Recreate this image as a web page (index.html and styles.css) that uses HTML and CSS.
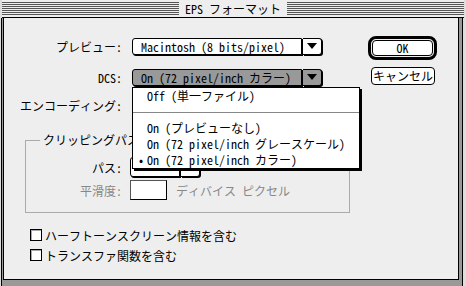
FILE: index.html
```html
<!DOCTYPE html>
<html lang="ja">
<head>
    <meta charset="UTF-8">
    <title>EPS フォーマット</title>
    <link rel="stylesheet" href="styles.css">
</head>
<body>
    <div class="window">
        <div class="titlebar">
            <span class="title">EPS フォーマット</span>
        </div>
        <div class="frame">
            <div class="content">
                <div class="main">
                    <div class="form">
                        <div class="row row-preview">
                            <span class="label">プレビュー:</span>
                            <div class="popup wide">
                                <span class="popup-text">Macintosh (8 bits/pixel)</span>
                                <span class="popup-arrow"><span class="tri"></span></span>
                            </div>
                        </div>
                        <div class="row row-dcs">
                            <span class="label">DCS:</span>
                            <div class="popup wide active">
                                <span class="popup-text">On (72 pixel/inch カラー)</span>
                                <span class="popup-arrow"><span class="tri"></span></span>

                                <!-- open menu of the DCS popup -->
                                <ul class="menu">
                                    <li><span class="mark"></span>Off (単一ファイル)</li>
                                    <li class="sep"></li>
                                    <li><span class="mark"></span>On (プレビューなし)</li>
                                    <li><span class="mark"></span>On (72 pixel/inch グレースケール)</li>
                                    <li><span class="mark">•</span>On (72 pixel/inch カラー)</li>
                                </ul>
                            </div>
                        </div>
                        <div class="row row-enc">
                            <span class="label">エンコーディング:</span>
                        </div>

                        <fieldset class="group">
                            <legend>クリッピングパス</legend>
                            <div class="row row-path">
                                <span class="label">パス:</span>
                                <div class="popup small">
                                    <span class="popup-text"></span>
                                    <span class="popup-arrow"></span>
                                </div>
                            </div>
                            <div class="row row-flat">
                                <span class="label dim">平滑度:</span>
                                <span class="field"></span>
                                <span class="unit dim">ディバイス ピクセル</span>
                            </div>
                        </fieldset>

                        <label class="check"><span class="box"></span>ハーフトーンスクリーン情報を含む</label>
                        <label class="check"><span class="box"></span>トランスファ関数を含む</label>
                    </div>

                    <div class="buttons">
                        <div class="ok-ring"><div class="btn ok">OK</div></div>
                        <div class="btn cancel">キャンセル</div>
                    </div>
                </div>
            </div>
        </div>
    </div>
</body>
</html>
```

FILE: styles.css
```css
body {
    margin: 0;
    background-color: #dddddd;
    font-family: "Noto Sans Mono CJK JP", "Noto Sans CJK JP", sans-serif;
    font-size: 12px;
    font-weight: 300;
    color: #000;
}

.window {
    width: 466px;
    height: 286px;
    background-color: #dddddd;
    overflow: hidden;
}

/* striped title bar */
.titlebar {
    height: 17px;
    margin: 0 2px 0 2px;
    border-bottom: 1px solid #000;
    background: repeating-linear-gradient(to bottom, #eeeeee 0, #eeeeee 1px, #555555 1px, #555555 2px);
    background-size: 100% 15px;
    background-position: 0 1px;
    background-repeat: no-repeat;
    background-color: #eeeeee;
    display: flex;
    justify-content: center;
    align-items: center;
}

.title {
    background-color: #eeeeee;
    padding: 0 6px;
    line-height: 17px;
    height: 17px;
}

.frame {
    margin: 0 3px 1px 1px;
    height: 266px;
    border: 1px solid #000;
    border-top: none;
    background-color: #999999;
    padding: 0 3px 3px 1px;
}

.content {
    height: 262px;
    border: 1px solid #000;
    border-top: none;
    background-color: #eeeeee;
    padding-top: 19px;
    box-sizing: border-box;
}

.main {
    display: grid;
    grid-template-columns: 346px 1fr;
}

.row {
    display: flex;
    align-items: center;
    height: 18px;
}

.label {
    width: 118px;
    text-align: right;
    flex-shrink: 0;
    white-space: nowrap;
}

.row-dcs { margin-top: 13px; }
.row-enc { margin-top: 10px; }

.popup {
    position: relative;
    display: flex;
    height: 17px;
    margin-left: 10px;
    box-sizing: border-box;
}

.popup-text {
    flex: 1;
    background-color: #fff;
    border: 1px solid #000;
    border-radius: 3px 0 0 3px;
    box-shadow: 1px 1px 0 #000;
    padding-left: 8px;
    line-height: 15px;
    white-space: nowrap;
}

.popup-arrow {
    width: 18px;
    background-color: #fff;
    border: 1px solid #000;
    border-left: none;
    border-radius: 0 3px 3px 0;
    box-shadow: 1px 1px 0 #000;
    margin-left: 1px;
    display: flex;
    align-items: center;
    justify-content: center;
}

.tri {
    width: 0;
    height: 0;
    border-left: 5px solid transparent;
    border-right: 5px solid transparent;
    border-top: 6px solid #000;
}

.wide { width: 190px; }

.active .popup-text,
.active .popup-arrow {
    background-color: #999999;
}

.menu {
    position: absolute;
    left: 0;
    top: 18px;
    width: 226px;
    margin: 0;
    padding: 0;
    list-style: none;
    background-color: #fff;
    border: 1px solid #000;
    box-shadow: 2px 2px 0 #000;
    z-index: 5;
}

.menu li {
    height: 16px;
    line-height: 16px;
    padding-left: 6px;
    white-space: nowrap;
}

.mark {
    display: inline-block;
    width: 8px;
}

.menu .sep {
    height: 16px;
    background: linear-gradient(#888, #888) 0 8px / 100% 1px no-repeat;
    padding: 0;
}

.group {
    margin: 19px 0 0 21px;
    width: 325px;
    height: 80px;
    padding: 0;
    border: 1px solid #aaaaaa;
    box-sizing: border-box;
}

.group legend {
    margin-left: 14px;
    padding: 0 3px;
    line-height: 14px;
}

.group .label { width: 96px; }

.row-path {
    height: 20px;
    margin-top: 10px;
}

.small {
    width: 70px;
    height: 20px;
    margin-left: 8px;
}

.small .popup-text { line-height: 18px; }

.row-flat {
    height: 20px;
    margin-top: 3px;
}

.field {
    width: 37px;
    height: 20px;
    margin-left: 8px;
    background-color: #fff;
    border: 1px solid #000;
    border-color: #555 #000 #000 #555;
    box-sizing: border-box;
}

.unit { margin-left: 9px; }

.dim { color: #888888; }

.check {
    display: flex;
    align-items: center;
    height: 12px;
    margin-left: 26px;
    margin-top: 8px;
    white-space: nowrap;
}

.group + .check { margin-top: 16px; }

.box {
    width: 12px;
    height: 12px;
    box-sizing: border-box;
    border: 1px solid #000;
    background-color: #fff;
    box-shadow: inset 1px 1px 0 #aaa;
    margin-right: 3px;
}

.buttons {
    padding-left: 18px;
    margin-top: -1px;
}

.btn {
    background-color: #fff;
    border: 1px solid #000;
    text-align: center;
    box-sizing: border-box;
}

.ok-ring {
    width: 69px;
    height: 24px;
    border: 3px solid #000;
    border-radius: 8px;
    padding: 1px;
    box-sizing: border-box;
    background-color: #eeeeee;
}

.ok {
    height: 16px;
    line-height: 14px;
    border-radius: 4px;
}

.cancel {
    width: 64px;
    height: 18px;
    line-height: 16px;
    margin: 7px 0 0 3px;
    border-radius: 4px;
}
```
